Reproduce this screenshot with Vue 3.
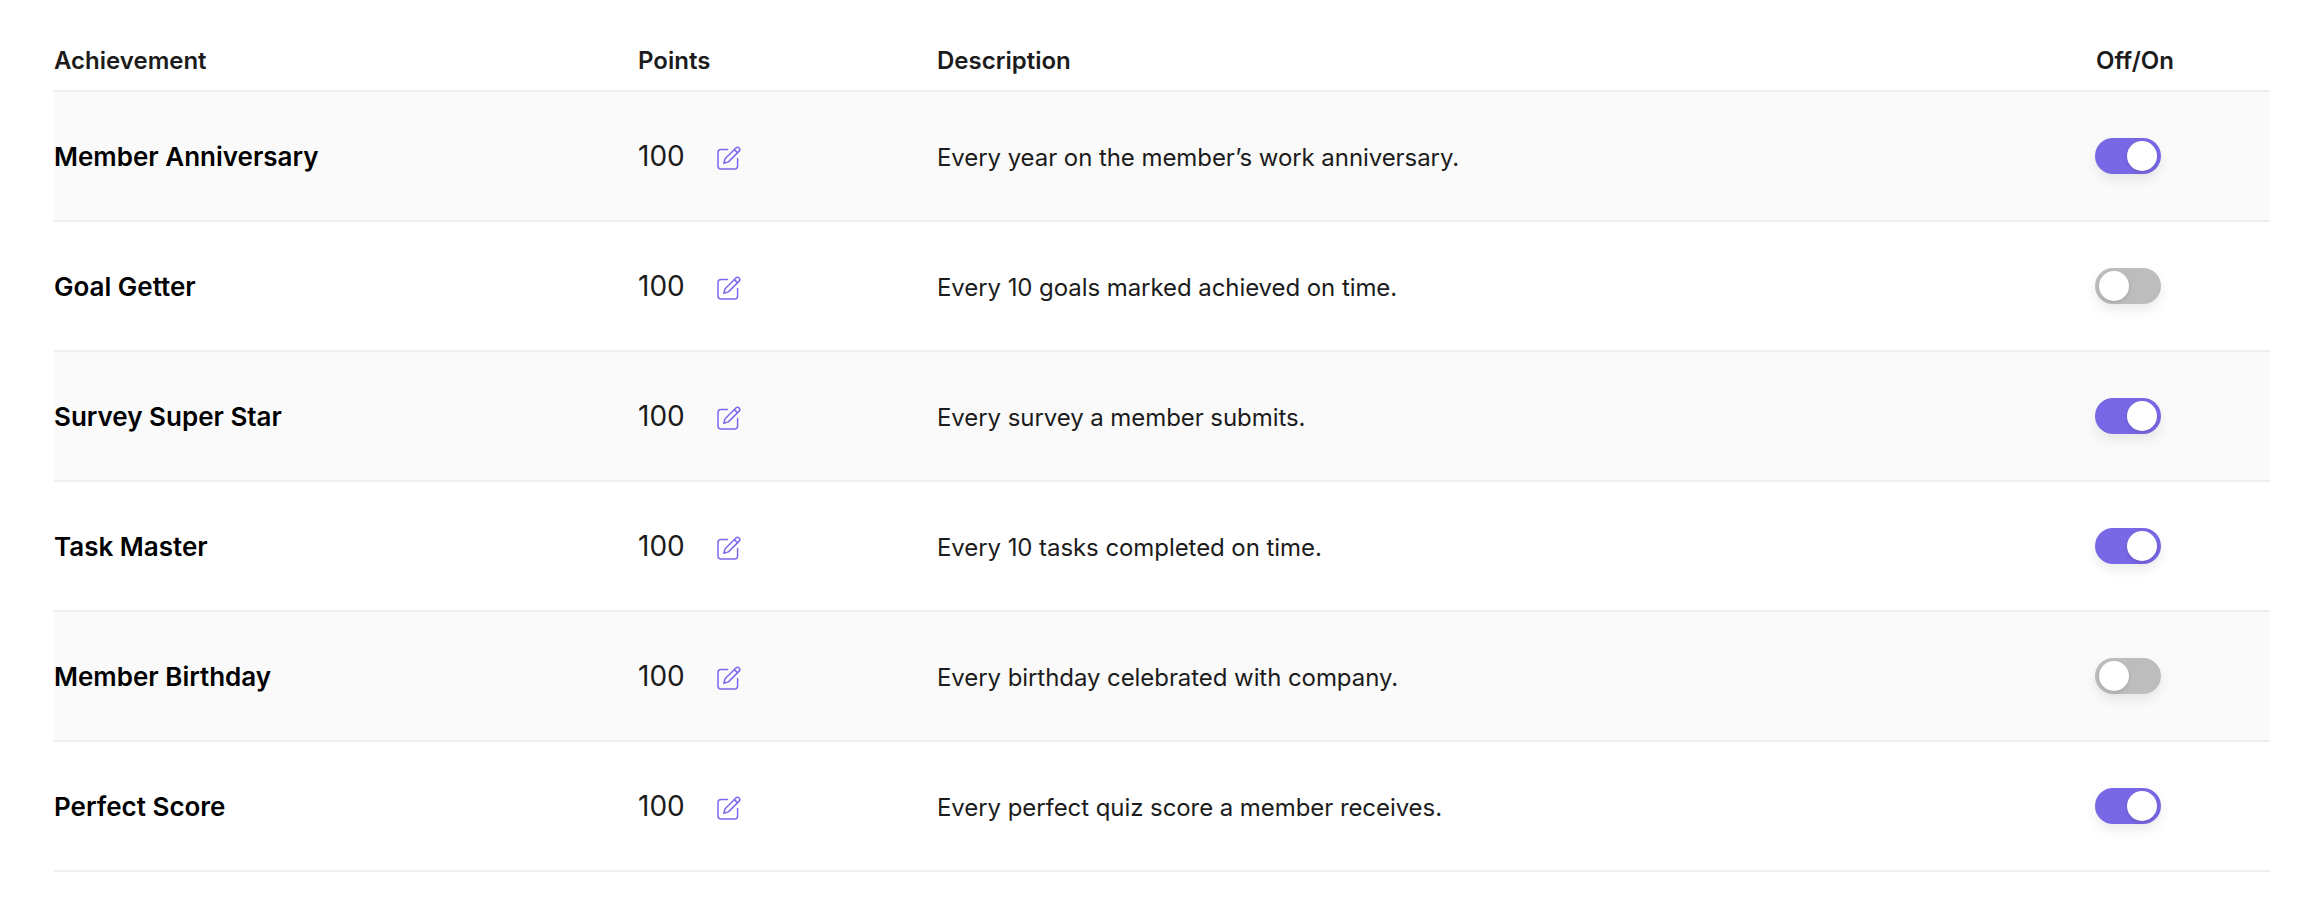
<template>
  <main class="page">
    <header class="row head">
      <div>Achievement</div>
      <div>Points</div>
      <div>Description</div>
      <div>Off/On</div>
    </header>
    <section
      v-for="item in achievements"
      :key="item.name"
      class="row item"
    >
      <div class="name">{{ item.name }}</div>
      <div class="points">
        <span>100</span>
        <svg class="edit" viewBox="0 0 24 24" fill="none" stroke="currentColor" stroke-width="1.5" stroke-linecap="round" stroke-linejoin="round" aria-hidden="true">
          <path d="M10.5 3.4H4a3 3 0 0 0-3 3V20a3 3 0 0 0 3 3h13.6a3 3 0 0 0 3-3v-7.5" />
          <path d="M19.2 1.7a2.3 2.3 0 0 1 3.2 3.2L11.4 15.9l-4.6 1.3 1.3-4.5L19.2 1.7Z" />
          <path d="M17.3 3.6l3.2 3.2" />
        </svg>
      </div>
      <div class="desc">{{ item.desc }}</div>
      <div class="cell-toggle">
        <span class="toggle" :class="{ on: item.on }"><i class="knob"></i></span>
      </div>
    </section>
  </main>
</template>

<script setup>
const achievements = [
  { name: "Member Anniversary", desc: "Every year on the member’s work anniversary.", on: true },
  { name: "Goal Getter", desc: "Every 10 goals marked achieved on time.", on: false },
  { name: "Survey Super Star", desc: "Every survey a member submits.", on: true },
  { name: "Task Master", desc: "Every 10 tasks completed on time.", on: true },
  { name: "Member Birthday", desc: "Every birthday celebrated with company.", on: false },
  { name: "Perfect Score", desc: "Every perfect quiz score a member receives.", on: true },
];
</script>

<style>
html,
body {
  background: #fff;
}
</style>

<style scoped>
.page {
  box-sizing: border-box;
  width: 2320px;
  height: 924px;
  padding: 0 50px 0 54px;
  font-family: Inter, "Liberation Sans", sans-serif;
  color: #1c1c1c;
}

.row {
  display: grid;
  grid-template-columns: 584px 299px 1159px 174px;
  align-items: center;
  box-sizing: border-box;
  border-bottom: 2px solid #f0f0f0;
}

.head {
  height: 92px;
  padding-top: 30px;
  font-size: 24px;
  font-weight: 600;
}

.item {
  height: 130px;
}

.item:nth-of-type(odd) {
  background: #fafafa;
}

.name {
  font-size: 26px;
  font-weight: 600;
  color: #000;
}

.points {
  display: flex;
  align-items: center;
  gap: 32px;
  font-size: 28px;
}

.edit {
  width: 24px;
  height: 24px;
  margin-top: 3px;
  color: #7b68ee;
}

.desc {
  padding-top: 2px;
  font-size: 24px;
  letter-spacing: -0.07px;
}

.cell-toggle {
  display: flex;
}

.toggle {
  display: flex;
  width: 66px;
  height: 36px;
  margin-left: -1px;
  padding: 3px 4px;
  box-sizing: border-box;
  border-radius: 18px;
  background: #bdbdbd;
  box-shadow: 0 6px 12px rgba(0, 0, 0, 0.08);
}

.toggle.on {
  justify-content: flex-end;
  background: #7868e6;
}

.knob {
  width: 30px;
  height: 30px;
  border-radius: 50%;
  background: #fff;
  box-shadow: 0 2px 4px rgba(0, 0, 0, 0.12);
}
</style>
